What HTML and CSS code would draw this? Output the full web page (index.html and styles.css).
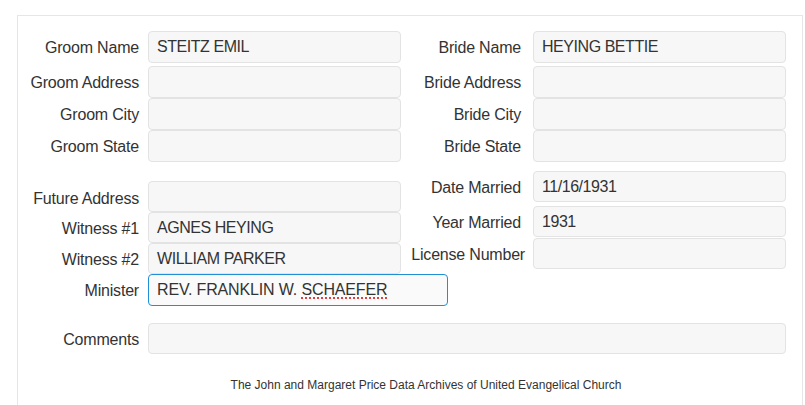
FILE: index.html
```html
<!DOCTYPE html>
<html lang="en">

<head>
    <meta charset="UTF-8">
    <title>Marriage Record</title>
    <link rel="stylesheet" href="styles.css">
</head>

<body>
    <div class="panel">
        <!-- Groom / Bride -->
        <div class="section">
            <div class="col col-left">
                <div class="row row-first">
                    <label class="label">Groom Name</label>
                    <div class="field">STEITZ EMIL</div>
                </div>
                <div class="row">
                    <label class="label">Groom Address</label>
                    <div class="field"></div>
                </div>
                <div class="row">
                    <label class="label">Groom City</label>
                    <div class="field"></div>
                </div>
                <div class="row">
                    <label class="label">Groom State</label>
                    <div class="field"></div>
                </div>
            </div>
            <div class="col col-right">
                <div class="row row-first">
                    <label class="label">Bride Name</label>
                    <div class="field">HEYING BETTIE</div>
                </div>
                <div class="row">
                    <label class="label">Bride Address</label>
                    <div class="field"></div>
                </div>
                <div class="row">
                    <label class="label">Bride City</label>
                    <div class="field"></div>
                </div>
                <div class="row">
                    <label class="label">Bride State</label>
                    <div class="field"></div>
                </div>
            </div>
        </div>

        <!-- Ceremony -->
        <div class="section section-ceremony">
            <div class="col col-left col-witness">
                <div class="row row-sm">
                    <label class="label label-low">Future Address</label>
                    <div class="field"></div>
                </div>
                <div class="row row-sm">
                    <label class="label">Witness #1</label>
                    <div class="field">AGNES HEYING</div>
                </div>
                <div class="row row-sm">
                    <label class="label">Witness #2</label>
                    <div class="field">WILLIAM PARKER</div>
                </div>
                <div class="row">
                    <label class="label">Minister</label>
                    <div class="field field-focus">REV. FRANKLIN W. <span class="misspelt">SCHAEFER</span></div>
                </div>
            </div>
            <div class="col col-right">
                <div class="row row-sm row-date">
                    <label class="label">Date Married</label>
                    <div class="field">11/16/1931</div>
                </div>
                <div class="row row-sm row-year">
                    <label class="label">Year Married</label>
                    <div class="field">1931</div>
                </div>
                <div class="row row-sm">
                    <label class="label label-long">License Number</label>
                    <div class="field"></div>
                </div>
            </div>
        </div>

        <div class="row row-sm row-comments">
            <label class="label">Comments</label>
            <div class="field field-wide"></div>
        </div>

        <p class="footer">The John and Margaret Price Data Archives of United Evangelical Church</p>
    </div>
</body>

</html>
```

FILE: styles.css
```css
/* Umum */

body {
    margin: 0;
    font-family: 'Liberation Sans', Arial, sans-serif;
    color: #333;
    background-color: #fff;
}

.panel {
    margin: 15px 2px 0 17px;
    padding: 15px 16px 20px 0;
    border: 1px solid #e6e6e6;
    border-bottom: none;
}

.section {
    display: flex;
}

.col-left {
    width: 383px;
}

.col-right {
    width: 385px;
}

/* Baris form */

.row {
    display: flex;
    align-items: center;
    height: 32px;
}

.row-sm {
    height: 31px;
}

.row-first {
    margin-bottom: 3px;
}

.label {
    flex-shrink: 0;
    width: 130px;
    padding: 2px 9px 0 0;
    box-sizing: border-box;
    text-align: right;
    font-size: 16px;
    letter-spacing: -0.2px;
    white-space: nowrap;
}

.col-right .label {
    width: 132px;
    padding-right: 12px;
}

.col-right .label-long {
    padding-right: 8px;
}

.label-low {
    padding-top: 5px;
}

.field {
    flex-shrink: 0;
    width: 253px;
    height: 100%;
    box-sizing: border-box;
    display: flex;
    align-items: center;
    padding: 0 8px;
    border: 1px solid #e3e3e3;
    border-radius: 4px;
    background-color: #f7f7f7;
    font-size: 16px;
    letter-spacing: -0.45px;
    white-space: pre;
}

.field-focus {
    width: 300px;
    border-color: #1f8fd6;
    background-color: #fafafa;
    letter-spacing: -0.15px;
}

.misspelt {
    text-decoration: underline dotted #e01010;
    text-underline-offset: 3px;
}

.field-wide {
    width: 638px;
}

/* Bagian upacara */

.section-ceremony {
    align-items: flex-start;
    margin-top: 9px;
}

.col-witness {
    padding-top: 10px;
}

.row-date {
    margin-bottom: 4px;
}

.row-year {
    margin-bottom: 1px;
}

.row-comments {
    margin-top: 17px;
}

.footer {
    margin: 24px 0 0;
    padding-left: 48px;
    text-align: center;
    font-size: 12px;
    line-height: 14px;
}
```
